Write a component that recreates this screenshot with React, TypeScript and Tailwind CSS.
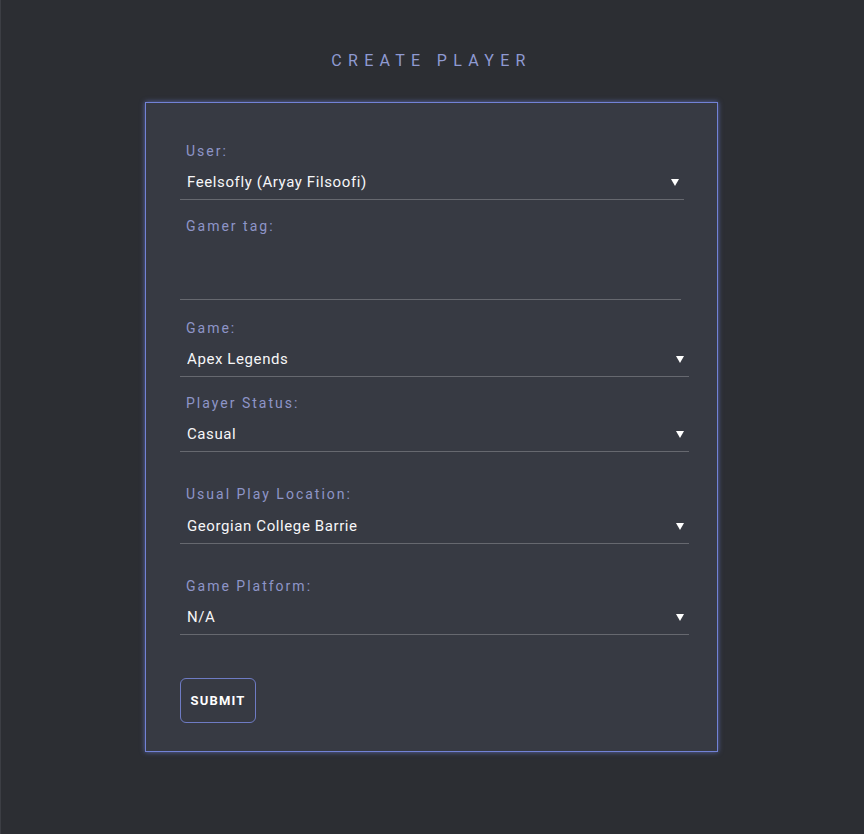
import React, { useState } from 'react';

const users = ['Feelsofly (Aryay Filsoofi)'];
const games = ['Apex Legends'];
const statuses = ['Casual'];
const locations = ['Georgian College Barrie'];
const platforms = ['N/A'];

function Caret() {
  return (
    <svg width="8" height="7" viewBox="0 0 8 7" className="pointer-events-none">
      <path d="M0 0h8L4 7z" fill="#ffffff" />
    </svg>
  );
}

function Label({ children, className = '' }: { children: React.ReactNode; className?: string }) {
  return <label className={`block pl-[6px] text-[14px] leading-[16px] tracking-[2px] text-[#8e95c8] ${className}`}>{children}</label>;
}

function Select({ value, options, onChange, width, className = 'mt-[7px]' }: { value: string; options: string[]; onChange: (v: string) => void; width: string; className?: string }) {
  return (
    <div className={`relative ${className} ${width}`}>
      <select
        value={value}
        onChange={(e) => onChange(e.target.value)}
        className="w-full h-[34px] appearance-none bg-transparent border-b border-[#66686f] pl-[7px] text-[15px] font-normal tracking-[0.6px] text-[#f6f6f8] outline-none"
      >
        {options.map((o) => <option key={o} value={o} className="bg-[#373a43]">{o}</option>)}
      </select>
      <span className="absolute top-[13px] right-[5px]"><Caret /></span>
    </div>
  );
}

export default function App() {
  const [form, setForm] = useState({ user: users[0], tag: '', game: games[0], status: statuses[0], location: locations[0], platform: platforms[0] });

  return (
    <div className="min-h-[834px] bg-[#2c2e33] shadow-[inset_1px_0_0_#3c3e44] pt-[50px] pr-[1px] font-['Roboto','Liberation_Sans',sans-serif]">
      <h1 className="text-center text-[16px] leading-[22px] tracking-[6.3px] text-[#8f9ad2] font-normal">CREATE PLAYER</h1>

      <form
        onSubmit={(e) => e.preventDefault()}
        className="mt-[30px] mx-auto w-[573px] bg-[#373a43] border border-[#7282d6] shadow-[0_0_5px_rgba(110,128,220,0.7)] pl-[34px] pt-[40px] pb-[28px]"
      >
        <Label>User:</Label>
        <Select value={form.user} options={users} onChange={(v) => setForm({ ...form, user: v })} width="w-[504px]" />

        <Label className="mt-[18px]">Gamer tag:</Label>
        <input
          value={form.tag}
          onChange={(e) => setForm({ ...form, tag: e.target.value })}
          className="block mt-[15px] w-[501px] h-[51px] bg-transparent border-b border-[#66686f] pl-[7px] text-[15px] text-white outline-none"
        />

        <Label className="mt-[20px]">Game:</Label>
        <Select value={form.game} options={games} onChange={(v) => setForm({ ...form, game: v })} width="w-[509px]" />

        <Label className="mt-[18px]">Player Status:</Label>
        <Select value={form.status} options={statuses} onChange={(v) => setForm({ ...form, status: v })} width="w-[509px]" />

        <Label className="mt-[34px]">Usual Play Location:</Label>
        <Select value={form.location} options={locations} onChange={(v) => setForm({ ...form, location: v })} width="w-[509px]" className="mt-[8px]" />

        <Label className="mt-[34px]">Game Platform:</Label>
        <Select value={form.platform} options={platforms} onChange={(v) => setForm({ ...form, platform: v })} width="w-[509px]" />

        <button
          type="submit"
          className="mt-[43px] w-[76px] h-[45px] rounded-[6px] border border-[#6e7bc4] text-[13px] font-bold tracking-[1.2px] text-white"
        >
          SUBMIT
        </button>
      </form>
    </div>
  );
}
